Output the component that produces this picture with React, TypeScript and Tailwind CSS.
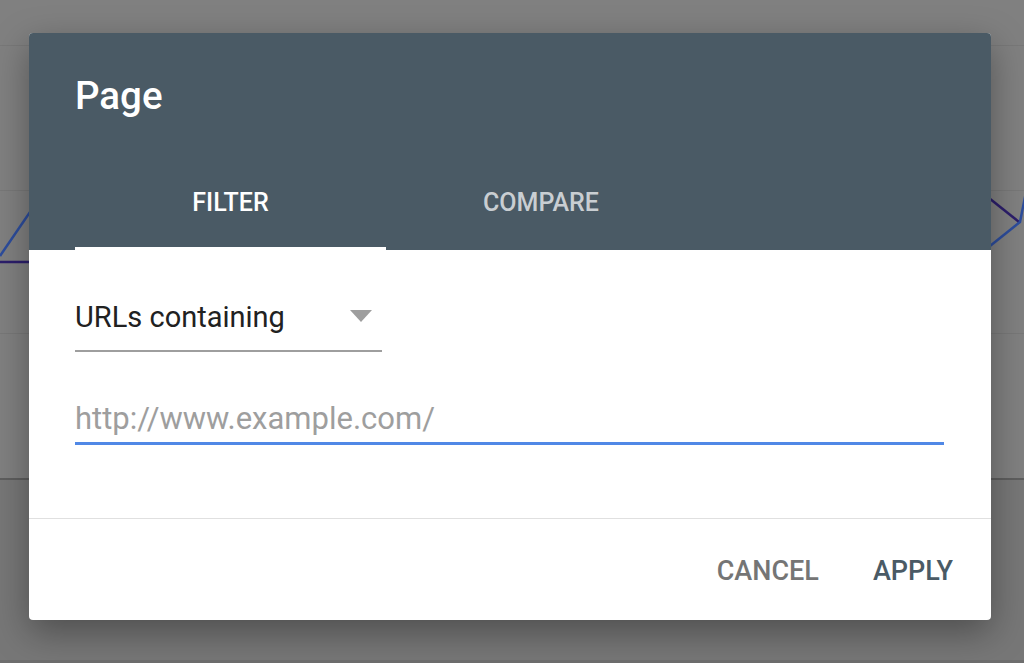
import React from "react";

export default function App() {
  return (
    <div
      className="relative w-[1024px] h-[663px] overflow-hidden bg-[#808080]"
      style={{ fontFamily: "Roboto, 'Noto Sans', sans-serif" }}
    >
      {/* dimmed page behind the dialog */}
      <div className="absolute inset-0 flex flex-col">
        <div className="h-[45px]" />
        <div className="h-[1px] bg-[#787878]" />
        <div className="h-[144px]" />
        <div className="h-[1px] bg-[#787878]" />
        <div className="h-[142px]" />
        <div className="h-[1px] bg-[#787878]" />
        <div className="h-[144px]" />
        <div className="h-[2px] bg-[#5e5e5e]" />
        <div className="flex-1 bg-[#777777]" />
        <div className="h-[3px] bg-[#6e6e6e]" />
      </div>
      <svg className="absolute inset-0" width="1024" height="663" viewBox="0 0 1024 663">
        <polyline points="0,262 30,262 60,190" fill="none" stroke="#2c1e6b" strokeWidth="2.5" />
        <polyline points="0,256 30,212 60,180" fill="none" stroke="#2d4d9c" strokeWidth="2.5" />
        <polyline points="960,175 1019,222" fill="none" stroke="#2c1e6b" strokeWidth="2.5" />
        <polyline points="960,270 1020,222 1026,192" fill="none" stroke="#2d4d9c" strokeWidth="2.5" />
      </svg>

      {/* dialog */}
      <div className="absolute left-[29px] top-[33px] w-[962px] rounded-[4px] bg-white shadow-[0_12px_36px_rgba(0,0,0,0.35)]">
        <div className="rounded-t-[4px] bg-[#4a5a65] pl-[46px]">
          <div className="pt-[41px] text-[38.5px] leading-[44px] font-medium text-white">Page</div>
          <div className="mt-[36px] flex h-[96px]">
            <div className="relative flex w-[311px] items-center justify-center pt-[1px] text-[25px] font-medium text-white">
              FILTER
              <div className="absolute bottom-0 left-0 right-0 h-[3px] bg-white" />
            </div>
            <div className="flex w-[310px] items-center justify-center pt-[1px] text-[25px] font-medium text-[#c9ced2]">
              COMPARE
            </div>
          </div>
        </div>

        <div className="pl-[46px] pr-[47px] pt-[49px] pb-[73px]">
          <div className="flex w-[307px] items-center justify-between border-b-2 border-[#9e9e9e] pb-[15px]">
            <span className="text-[29px] leading-[36px] text-[#212121]">URLs containing</span>
            <span className="mr-[10px] mb-[2px] h-0 w-0 border-l-[11.5px] border-r-[11.5px] border-t-[12px] border-l-transparent border-r-transparent border-t-[#9e9e9e]" />
          </div>
          <div className="mt-[49px] border-b-[3px] border-[#5088e6] pb-[5px] text-[31px] leading-[36px] text-[#9e9e9e]">
            http://www.example.com/
          </div>
        </div>

        <div className="flex justify-end gap-[54px] border-t border-[#e0e0e0] pt-[36px] pb-[33px] pr-[38px]">
          <span className="text-[27px] leading-[32px] font-medium text-[#757575]">CANCEL</span>
          <span className="text-[27px] leading-[32px] font-medium text-[#4a5a65]">APPLY</span>
        </div>
      </div>
    </div>
  );
}
